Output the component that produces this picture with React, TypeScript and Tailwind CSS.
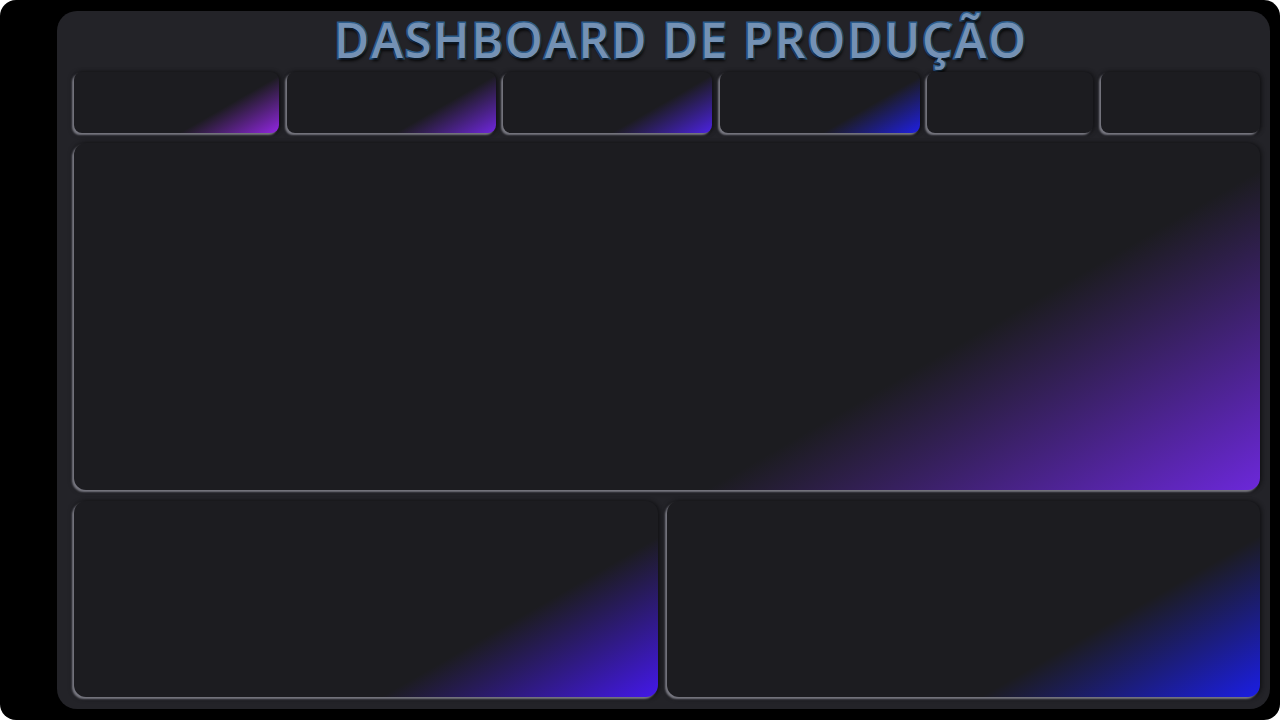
import React from "react";

const cardShadow =
  "shadow-[-2px_2px_2px_rgba(125,125,135,0.95),-1px_1px_5px_rgba(0,0,0,0.55),2px_0px_4px_rgba(0,0,0,0.35)]";

function Card({ className, grad }: { className: string; grad?: string }) {
  return <div className={`${className} ${cardShadow} bg-[#1c1c20] ${grad ?? ""}`} />;
}

export default function App() {
  return (
    <div className="w-[1280px] h-[720px] bg-white">
      <div className="w-full h-full bg-black rounded-[16px] pl-[57px] pt-[11px] pr-[10px] pb-[11px]">
        <div className="w-full h-full bg-[#232328] rounded-[20px] pl-[17px] pr-[10px] pb-[12px] flex flex-col">
          <div className="h-[61px] flex items-start justify-center">
            <h1
              className="text-[48px] leading-none mt-[5px] font-semibold text-[#7491b4] tracking-[2px] [font-family:'Open_Sans',sans-serif] [-webkit-text-stroke:3px_#2c5d8c] [paint-order:stroke_fill] [text-shadow:1px_3px_3px_rgba(0,0,0,0.8)] ml-[28px]"
            >
              DASHBOARD DE PRODUÇÃO
            </h1>
          </div>
          <div className="flex justify-between h-[61px]">
            <Card className="w-[205px] rounded-[8px]" grad="bg-[linear-gradient(150deg,#1c1c20_68%,#9226e2_100%)]" />
            <Card className="w-[209px] rounded-[8px]" grad="bg-[linear-gradient(150deg,#1c1c20_68%,#7026de_100%)]" />
            <Card className="w-[209px] rounded-[8px]" grad="bg-[linear-gradient(150deg,#1c1c20_68%,#4c22e2_100%)]" />
            <Card className="w-[200px] rounded-[8px]" grad="bg-[linear-gradient(150deg,#1c1c20_68%,#1f1fe4_100%)]" />
            <Card className="w-[166px] rounded-[8px]" />
            <Card className="w-[159px] rounded-[8px]" />
          </div>
          <Card className="mt-[10px] h-[347px] rounded-[12px]" grad="bg-[linear-gradient(150deg,#1c1c20_69%,#6c28da_100%)]" />
          <div className="mt-[11px] flex justify-between flex-1">
            <Card className="w-[584px] rounded-[12px]" grad="bg-[linear-gradient(150deg,#1c1c20_70%,#4418ea_100%)]" />
            <Card className="w-[593px] rounded-[12px]" grad="bg-[linear-gradient(150deg,#1c1c20_70%,#1b1ee4_100%)]" />
          </div>
        </div>
      </div>
    </div>
  );
}
